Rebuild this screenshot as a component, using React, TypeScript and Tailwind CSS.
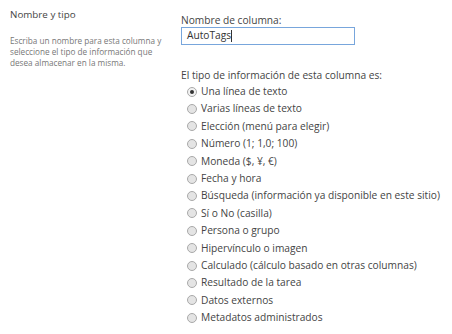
import React from "react";

const options = [
  "Una línea de texto",
  "Varias líneas de texto",
  "Elección (menú para elegir)",
  "Número (1; 1,0; 100)",
  "Moneda ($, ¥, €)",
  "Fecha y hora",
  "Búsqueda (información ya disponible en este sitio)",
  "Sí o No (casilla)",
  "Persona o grupo",
  "Hipervínculo o imagen",
  "Calculado (cálculo basado en otras columnas)",
  "Resultado de la tarea",
  "Datos externos",
  "Metadatos administrados",
];

export default function App() {
  return (
    <div
      className="w-[452px] h-[334px] bg-white flex overflow-hidden"
      style={{ fontFamily: '"Open Sans", sans-serif' }}
    >
      <div className="w-[181px] pl-[10px] pt-[7px] shrink-0">
        <div className="text-[9.8px] leading-[16px] text-[#444] whitespace-nowrap">Nombre y tipo</div>
        <div className="mt-[12px] text-[8.2px] leading-[11px] text-[#777] whitespace-nowrap">
          <div>Escriba un nombre para esta columna y</div>
          <div>seleccione el tipo de información que</div>
          <div>desea almacenar en la misma.</div>
        </div>
      </div>
      <div className="flex-1 pt-[12px]">
        <div className="text-[10.2px] leading-[16px] text-[#444] whitespace-nowrap">Nombre de columna:</div>
        <div className="mt-[-1px] w-[174px] h-[18px] border border-[#78a6dc] flex items-center pl-[5px] text-[10.2px] text-[#333]">
          AutoTags<span className="inline-block w-px h-[12px] bg-[#333]" />
        </div>
        <div className="mt-[22px] text-[10.2px] leading-[16px] text-[#444] whitespace-nowrap">
          El tipo de información de esta columna es:
        </div>
        <div className="flex flex-col">
          {options.map((o, i) => (
            <div
              key={o}
              className="h-[17.4px] flex items-center pl-[6px] text-[10.2px] text-[#444] whitespace-nowrap"
            >
              <span
                className={
                  "w-[10px] h-[10px] rounded-full border border-[#a9a9a9] flex items-center justify-center mr-[4px] shrink-0 " +
                  (i === 0 ? "bg-[#f2f2f2]" : "bg-[#e4e4e4]")
                }
              >
                {i === 0 && <span className="w-[4px] h-[4px] rounded-full bg-[#333]" />}
              </span>
              {o}
            </div>
          ))}
        </div>
      </div>
    </div>
  );
}
